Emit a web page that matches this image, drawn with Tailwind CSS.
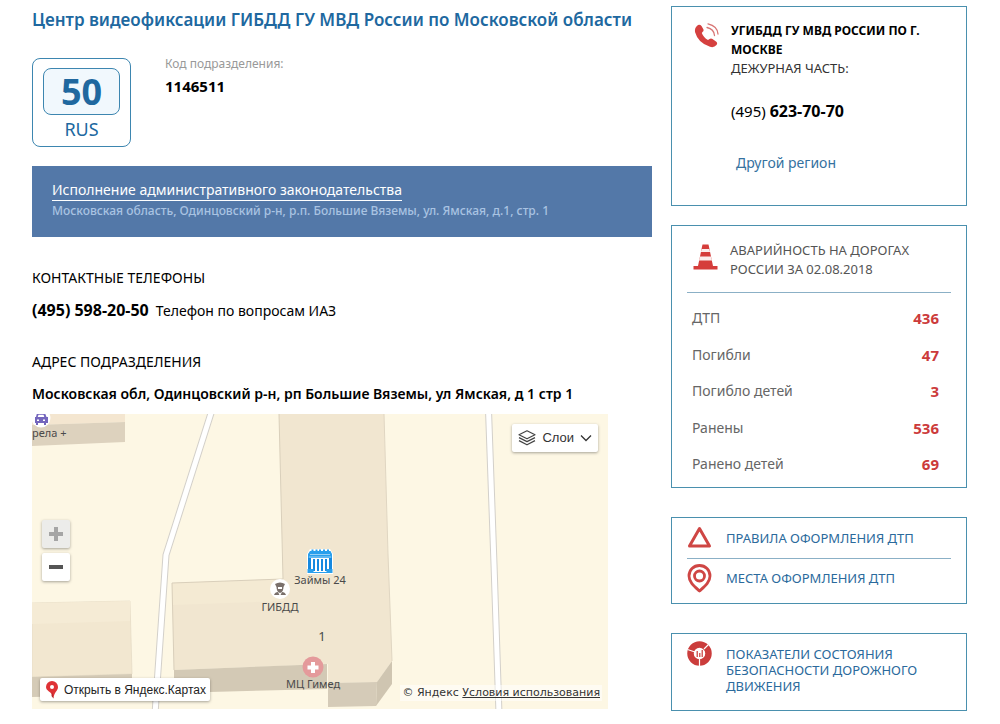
<!DOCTYPE html>
<html lang="ru">
<head>
<meta charset="utf-8">
<meta name="viewport" content="width=device-width, initial-scale=1">
<title>Центр видеофиксации ГИБДД</title>
<script src="https://cdn.jsdelivr.net/npm/@tailwindcss/browser@4"></script>
</head>
<body class="bg-white text-black font-['Noto_Sans','Open_Sans',sans-serif] text-sm">
<div class="flex items-start gap-[19px] pl-8 pr-[33px] pt-1.5">

  <main class="flex-1 min-w-0">
    <h1 class="text-[17px] leading-7 font-semibold text-[#20689f] whitespace-nowrap">Центр видеофиксации ГИБДД ГУ МВД России по Московской области</h1>

    <section class="flex gap-[34px] mt-6">
      <div class="w-[99px] h-[89px] shrink-0 rounded-lg border border-[#3d86b0] px-2.5 pt-[9px] text-center text-[#20689f]">
        <div class="h-[47px] rounded-lg border border-[#3d86b0] bg-[#f1f8fd] text-4xl leading-[46px] font-bold">50</div>
        <div class="text-lg leading-7">RUS</div>
      </div>
      <dl class="-mt-1">
        <dt class="text-xs leading-5 text-[#999]">Код подразделения:</dt>
        <dd class="mt-0.5 text-[15px] leading-5 font-bold">1146511</dd>
      </dl>
    </section>

    <section class="mt-[19px] h-[71px] bg-[#5378a8] px-5 pt-3.5">
      <a href="#" class="inline-block text-sm leading-5 text-white border-b border-white">Исполнение административного законодательства</a>
      <p class="text-xs leading-5 font-medium text-[#a9c3e2]">Московская область, Одинцовский р-н, р.п. Большие Вяземы, ул. Ямская, д.1, стр. 1</p>
    </section>

    <h2 class="mt-[31px] text-sm leading-5">КОНТАКТНЫЕ ТЕЛЕФОНЫ</h2>
    <p class="mt-3 flex items-baseline gap-[7px] text-sm leading-5"><b class="text-base leading-5">(495) 598-20-50</b> Телефон по вопросам ИАЗ</p>

    <h2 class="mt-[31px] text-sm leading-5">АДРЕС ПОДРАЗДЕЛЕНИЯ</h2>
    <p class="mt-3 text-sm leading-5 font-semibold">Московская обл, Одинцовский р-н, рп Большие Вяземы, ул Ямская, д 1 стр 1</p>

    <section aria-label="Карта" class="relative mt-2.5 mr-11 h-[295px] overflow-hidden bg-[#fdf7e4]">
      <svg class="absolute inset-0" width="576" height="295" viewBox="0 0 576 295" font-family="Noto Sans, sans-serif" font-size="11" fill="#4a4a4a">
        <!-- roads -->
        <g fill="none" stroke-linejoin="round">
          <path d="M180 -4 L134 141 L123 300" stroke="#d3d0ca" stroke-width="7"/>
          <path d="M180 -4 L134 141 L123 300" stroke="#fff" stroke-width="5"/>
          <path d="M456.500 -4 L462 150 L467 300" stroke="#d3d0ca" stroke-width="7"/>
          <path d="M456.500 -4 L462 150 L467 300" stroke="#fff" stroke-width="5"/>
        </g>
        <!-- buildings -->
        <path d="M0 0H93V8L0 11Z" fill="#f4e6d0"/>
        <path d="M0 11L93 8V28L0 32Z" fill="#ddd2be"/>
        <path d="M0 189L98 187L100 260L0 263Z" fill="#f2e7d0" stroke="#e4dac4" stroke-width=".7"/>
        <path d="M0 189L98 187V207L0 210Z" fill="#f5ebd5"/>
        <path d="M0 263L100 260V281L0 283Z" fill="#d5cbb7"/>
        <path d="M247 0H352L356 140L360 247L345 268L296 269V250L142 256L140 169L251 165Z" fill="#f1e6d0"/>
        <path d="M140 169L251 165L252 187L140 191Z" fill="#f4ead3"/>
        <path d="M247 0L251 165L140 169L142 256" fill="none" stroke="#d9cfbb" stroke-width="1"/>
        <path d="M352 0L356 140L360 247" fill="none" stroke="#e0d6c2" stroke-width="1"/>
        <path d="M142 256L295 250V275L178 278H142Z" fill="#d3c9b5"/>
        <path d="M296 269L345 268L344 292L296 293Z" fill="#d5cbb8"/>
        <path d="M345 268L360 247V270L344 292Z" fill="#cfc5b1"/>
        <!-- car service -->
        <circle cx="9" cy="4" r="9.500" fill="#fff"/>
        <path d="M5 -1h8l1.500 4H16v6h-2v2h-2v-2H6v2H4v-2H3V3H4z" fill="#7466bd"/>
        <path d="M6.500 .8h5l.8 2.200H5.700zM5 5.500h2v1.500H5zM11 5.500h2v1.500h-2z" fill="#fff"/>
        <text x="0" y="23">рела +</text>
        <!-- loans office -->
        <path d="M275 140l3-5h20l3 5v20h-26z" fill="#fff"/>
        <path d="M278 137h1.500v-1.500h2v1.500h2v-1.500h2v1.500h1.500v-1.500h2v1.500h2v-1.500h2v1.500h2v-1.500h2v1.500h1.500l1.500 3v4h-24v-4z" fill="#299fec"/>
        <path d="M278 140.500h20M277 143h22" stroke="#c9e6fb" stroke-width=".7"/>
        <path d="M276 144h3v12h-3zM281 145h2v12h-2zM285 145h2v12h-2zM289 145h2v12h-2zM293 145h2v12h-2zM297 144h3v12h-3z" fill="#1689e0"/>
        <path d="M275.500 155h6v4h-6zM294.500 155h6v4h-6zM281 158h14v1h-14z" fill="#299fec"/>
        <text x="288" y="170" text-anchor="middle">Займы 24</text>
        <!-- traffic police -->
        <circle cx="248" cy="175" r="10" fill="#fff"/>
        <path d="M243 170q5-3 10 0l-1.500 3q0 5-3.500 6q-3.500-1-3.500-6z" fill="#7a706b"/>
        <path d="M246 173h4v2h-4z" fill="#fff"/>
        <path d="M242 181q1-3 4-3l1.500 3zM254 181q-1-3-4-3l-1.500 3z" fill="#7a706b"/>
        <text x="248" y="197" text-anchor="middle">ГИБДД</text>
        <text x="290" y="227" text-anchor="middle" font-size="13">1</text>
        <!-- medical centre -->
        <circle cx="281" cy="253" r="10.500" fill="#e49a9b"/>
        <path d="M279 248h4v3.500h3.500v4H283v3.500h-4v-3.500h-3.500v-4h3.500z" fill="#fff"/>
        <text x="281" y="274" text-anchor="middle">МЦ Гимед</text>
      </svg>

      <button type="button" class="absolute right-2.5 top-2.5 flex h-7 items-center gap-1.5 rounded-xs bg-white px-1.5 text-[13px] text-[#333] shadow-[0_1px_3px_rgba(0,0,0,0.35)] font-['Liberation_Sans',Arial,sans-serif]">
        <svg width="18" height="16" viewBox="0 0 18 16" fill="none" stroke="#444" stroke-width="1.200" stroke-linejoin="round"><path d="M9 .8L17 4.800L9 8.800L1 4.800Z"/><path d="M1 7.600L9 11.600L17 7.600M1 10.600L9 14.800L17 10.600"/></svg>
        Слои
        <svg width="12" height="8" viewBox="0 0 12 8" fill="none" stroke="#333" stroke-width="1.300"><path d="M1 1.500L6 6.500L11 1.500"/></svg>
      </button>

      <div class="absolute left-2.5 top-[106px] flex flex-col gap-[5px]">
        <button type="button" aria-label="Приблизить" class="flex size-7 items-center justify-center rounded-xs bg-[#ececea] shadow-[0_1px_3px_rgba(0,0,0,0.35)]">
          <svg width="14" height="14" viewBox="0 0 14 14" fill="#a5a5a5"><path d="M5 0h4v5h5v4H9v5H5V9H0V5h5z"/></svg>
        </button>
        <button type="button" aria-label="Отдалить" class="flex size-7 items-center justify-center rounded-xs bg-white shadow-[0_1px_3px_rgba(0,0,0,0.35)]">
          <svg width="14" height="4" viewBox="0 0 14 4" fill="#555"><path d="M0 0h14v4H0z"/></svg>
        </button>
      </div>

      <a href="#" class="absolute bottom-2 left-2 flex h-[23px] items-center gap-1.5 rounded-xs bg-white pl-1.5 pr-1 text-xs text-[#222] shadow-[0_1px_3px_rgba(0,0,0,0.35)] font-['Liberation_Sans',Arial,sans-serif]">
        <svg width="12" height="18" viewBox="0 0 12 18"><path d="M6 0a6 6 0 0 1 6 6c0 4-4 5-4.500 11.500L6 14C5 10.500 0 10 0 6a6 6 0 0 1 6-6z" fill="#df3236"/><path d="M6 11l1.500 6.500L5.500 15z" fill="#a81e22"/><circle cx="6" cy="6" r="2" fill="#fff"/></svg>
        Открыть в Яндекс.Картах
      </a>
      <p class="absolute bottom-2 right-1.5 bg-white/50 px-0.5 text-[11px] leading-4 text-[#333] font-['DejaVu_Sans',Verdana,sans-serif]">© Яндекс <a href="#" class="underline">Условия использования</a></p>
    </section>
  </main>

  <aside class="w-[296px] shrink-0">
    <section class="flex h-[200px] gap-3 border border-[#4a90ae] pl-[22px] pr-4 pt-3.5">
      <svg class="shrink-0 mt-0.5" width="25" height="25" viewBox="0 0 25 25">
        <path d="M4 2Q6 1 7.500 3L9.500 6.500Q10 8 8.500 9L7.800 10Q9.500 14.500 14 17L15.500 16Q17 15 18.500 16L22 18.500Q24 20 22.500 22Q20 25 16 23.800Q4 20 1 9Q.3 4.500 4 2Z" fill="#d5403f"/>
        <path d="M13 4.500Q20 6 20.500 12.500M14 .8Q23.500 3 24 11" fill="none" stroke="#d87574" stroke-width="1.300" stroke-linecap="round"/>
      </svg>
      <div>
        <h2 class="text-xs leading-[19px] font-bold">УГИБДД ГУ МВД РОССИИ ПО Г. МОСКВЕ</h2>
        <p class="text-[13px] leading-[19px] text-[#333]">ДЕЖУРНАЯ ЧАСТЬ:</p>
        <p class="mt-[23px] text-[15px] leading-5">(495) <b class="text-base leading-5">623-70-70</b></p>
        <a href="#" class="mt-8 ml-[5px] block text-sm leading-5 text-[#35729f]">Другой регион</a>
      </div>
    </section>

    <section class="mt-[19px] h-[263px] border border-[#4a90ae] px-[15px] pt-[15px] text-[#555]">
      <div class="flex gap-3 border-b border-[#8bb0c6] pb-[13px] pl-1.5">
        <svg class="mt-[3px] shrink-0" width="25" height="26" viewBox="0 0 25 26" fill="#d53d3b">
          <path d="M9.500 0.500h6L20 22h4.500v3.500H.5V22H5z"/>
          <path d="M8.700 5h7.600l.8 3H7.900zM7 12.500h11l1 4H6z" fill="#fbeeed"/>
        </svg>
        <h2 class="text-[13px] leading-[19px]">АВАРИЙНОСТЬ НА ДОРОГАХ<br>РОССИИ ЗА 02.08.2018</h2>
      </div>
      <table class="mt-[7px] w-full text-sm leading-5 text-[#666]">
        <tbody>
          <tr class="h-9"><th scope="row" class="pl-[5px] text-left font-normal">ДТП</th><td class="pr-3 text-right text-[15px] font-bold text-[#cc3b3b]">436</td></tr>
          <tr class="h-[37px]"><th scope="row" class="pl-[5px] text-left font-normal">Погибли</th><td class="pr-3 text-right text-[15px] font-bold text-[#cc3b3b]">47</td></tr>
          <tr class="h-9"><th scope="row" class="pl-[5px] text-left font-normal">Погибло детей</th><td class="pr-3 text-right text-[15px] font-bold text-[#cc3b3b]">3</td></tr>
          <tr class="h-[37px]"><th scope="row" class="pl-[5px] text-left font-normal">Ранены</th><td class="pr-3 text-right text-[15px] font-bold text-[#cc3b3b]">536</td></tr>
          <tr class="h-9"><th scope="row" class="pl-[5px] text-left font-normal">Ранено детей</th><td class="pr-3 text-right text-[15px] font-bold text-[#cc3b3b]">69</td></tr>
        </tbody>
      </table>
    </section>

    <nav class="mt-[29px] h-[87px] border border-[#4a90ae] px-[15px] text-[13px] leading-5 text-[#2b6a9c]">
      <a href="#" class="flex h-[41px] items-center gap-3.5 border-b border-[#8bb0c6]">
        <svg class="shrink-0" width="25" height="24" viewBox="0 0 25 24" fill="none" stroke="#cf4644" stroke-width="3" stroke-linejoin="round"><path d="M12.500 2.500L22.500 20H2.500Z"/></svg>
        ПРАВИЛА ОФОРМЛЕНИЯ ДТП
      </a>
      <a href="#" class="flex h-[38px] items-center gap-3.5">
        <svg class="shrink-0" width="25" height="29" viewBox="0 0 25 29" fill="none" stroke="#cf4644"><path d="M12.500 1.500C6.500 1.500 2 6 2 12C2 18 7 22 12.500 27C18 22 23 18 23 12C23 6 18.500 1.500 12.500 1.500Z" stroke-width="2.800" stroke-linejoin="round"/><circle cx="12.500" cy="12" r="5" stroke-width="2.800"/></svg>
        МЕСТА ОФОРМЛЕНИЯ ДТП
      </a>
    </nav>

    <nav class="mt-[29px] h-[78px] border border-[#4a90ae] px-[15px] pt-[7px] text-[13px] leading-4 text-[#2b6a9c]">
      <a href="#" class="flex gap-3.5">
        <svg class="shrink-0" width="25" height="25" viewBox="0 0 25 25">
          <circle cx="12.500" cy="12.500" r="9" fill="none" stroke="#cb3d3c" stroke-width="6.500"/>
          <path d="M17 8L21.500 3.500M8 11L.5 8.500M12.500 18V25" stroke="#fff" stroke-width="1.200"/>
          <path d="M9.500 10h1.500v6h-1.500zM12 12h1.500v4H12zM14.500 9H16v7h-1.500z" fill="#d4605f"/>
        </svg>
        <span class="pt-[5px]">ПОКАЗАТЕЛИ СОСТОЯНИЯ БЕЗОПАСНОСТИ ДОРОЖНОГО ДВИЖЕНИЯ</span>
      </a>
    </nav>
  </aside>
</div>
</body>
</html>
